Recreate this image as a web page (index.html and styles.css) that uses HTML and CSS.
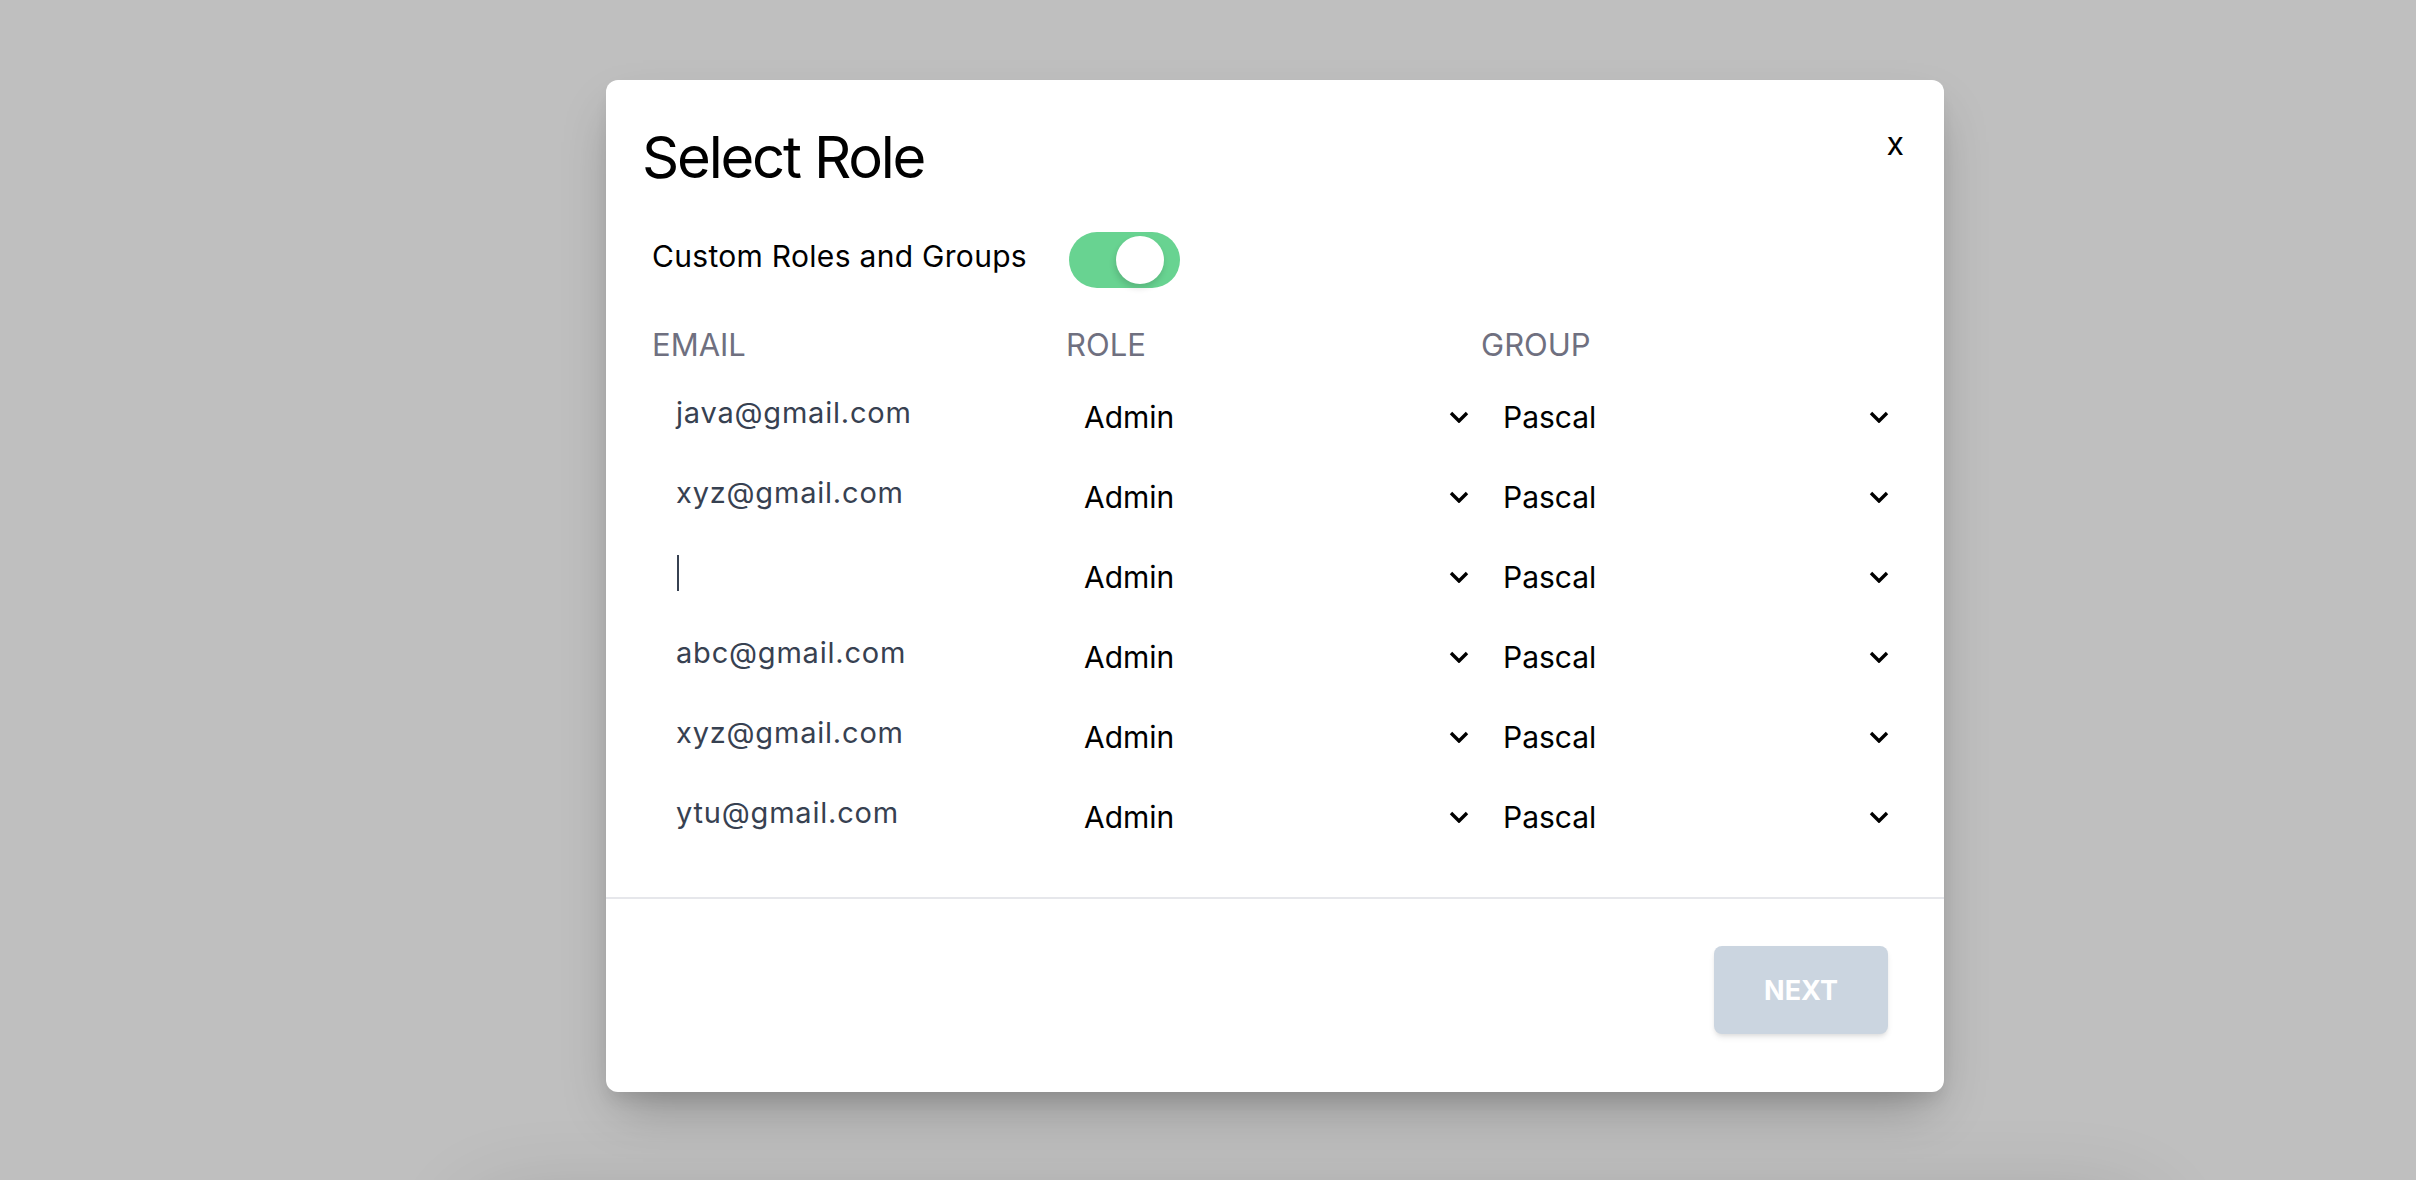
FILE: index.html
```html
<!DOCTYPE html>
<html lang="en">
<head>
<meta charset="utf-8">
<title>Select Role</title>
<link rel="stylesheet" href="styles.css">
</head>
<body>
<div class="backdrop">
  <div class="modal">
    <div class="title-row">
      <h1 class="title">Select Role</h1>
      <span class="close">x</span>
    </div>
    <div class="toggle-row">
      <span class="toggle-label">Custom Roles and Groups</span>
      <span class="toggle"><span class="knob"></span></span>
    </div>
    <div class="grid head">
      <span>EMAIL</span>
      <span>ROLE</span>
      <span>GROUP</span>
    </div>
    <div class="rows">
      <div class="grid row">
        <span class="email">java@gmail.com</span>
        <span class="select role"><span>Admin</span><svg class="chev" viewBox="0 0 20 12"><polyline points="2,2 10,10 18,2"/></svg></span>
        <span class="select group"><span>Pascal</span><svg class="chev" viewBox="0 0 20 12"><polyline points="2,2 10,10 18,2"/></svg></span>
      </div>
      <div class="grid row">
        <span class="email">xyz@gmail.com</span>
        <span class="select role"><span>Admin</span><svg class="chev" viewBox="0 0 20 12"><polyline points="2,2 10,10 18,2"/></svg></span>
        <span class="select group"><span>Pascal</span><svg class="chev" viewBox="0 0 20 12"><polyline points="2,2 10,10 18,2"/></svg></span>
      </div>
      <div class="grid row">
        <span class="email"><span class="caret"></span></span>
        <span class="select role"><span>Admin</span><svg class="chev" viewBox="0 0 20 12"><polyline points="2,2 10,10 18,2"/></svg></span>
        <span class="select group"><span>Pascal</span><svg class="chev" viewBox="0 0 20 12"><polyline points="2,2 10,10 18,2"/></svg></span>
      </div>
      <div class="grid row">
        <span class="email">abc@gmail.com</span>
        <span class="select role"><span>Admin</span><svg class="chev" viewBox="0 0 20 12"><polyline points="2,2 10,10 18,2"/></svg></span>
        <span class="select group"><span>Pascal</span><svg class="chev" viewBox="0 0 20 12"><polyline points="2,2 10,10 18,2"/></svg></span>
      </div>
      <div class="grid row">
        <span class="email">xyz@gmail.com</span>
        <span class="select role"><span>Admin</span><svg class="chev" viewBox="0 0 20 12"><polyline points="2,2 10,10 18,2"/></svg></span>
        <span class="select group"><span>Pascal</span><svg class="chev" viewBox="0 0 20 12"><polyline points="2,2 10,10 18,2"/></svg></span>
      </div>
      <div class="grid row">
        <span class="email">ytu@gmail.com</span>
        <span class="select role"><span>Admin</span><svg class="chev" viewBox="0 0 20 12"><polyline points="2,2 10,10 18,2"/></svg></span>
        <span class="select group"><span>Pascal</span><svg class="chev" viewBox="0 0 20 12"><polyline points="2,2 10,10 18,2"/></svg></span>
      </div>
    </div>
    <div class="footer">
      <button class="next">NEXT</button>
    </div>
  </div>
  <div class="under-shadow"></div>
</div>
</body>
</html>
```

FILE: styles.css
```css
* { box-sizing: border-box; }
html, body { margin: 0; padding: 0; }
body {
  width: 2416px;
  height: 1180px;
  overflow: hidden;
  background: #bfbfbf;
  font-family: Inter, "Noto Sans", "Liberation Sans", sans-serif;
  color: #000;
}
.backdrop {
  position: relative;
  height: 1180px;
  overflow: hidden;
  padding-top: 80px;
  padding-left: 606px;
}
.modal {
  width: 1338px;
  background: #fff;
  border-radius: 12px;
  box-shadow: 0 25px 50px -12px rgba(0,0,0,0.28), 0 10px 15px -3px rgba(0,0,0,0.08);
  position: relative;
  z-index: 1;
}
.title-row {
  display: flex;
  justify-content: space-between;
  align-items: flex-start;
  padding: 42px 40px 0 36px;
}
.title {
  margin: 0;
  font-size: 58px;
  line-height: 70px;
  font-weight: 400;
  letter-spacing: -2.2px;
}
.close {
  margin-top: 6px;
  font-size: 32px;
  line-height: 32px;
}
.toggle-row {
  display: flex;
  align-items: flex-start;
  gap: 42px;
  margin-top: 40px;
  padding-left: 46px;
}
.toggle-label {
  margin-top: 6px;
  font-size: 30px;
  line-height: 36px;
  letter-spacing: 0.3px;
}
.toggle {
  display: flex;
  justify-content: flex-end;
  align-items: center;
  width: 111px;
  height: 56px;
  padding: 0 16px 0 0;
  border-radius: 28px;
  background: #68d391;
}
.knob {
  width: 48px;
  height: 48px;
  border-radius: 50%;
  background: #fff;
  box-shadow: -1px 4px 6px rgba(0,0,0,0.14);
}
.grid {
  display: grid;
  grid-template-columns: 414px 414px 414px;
  padding-left: 46px;
}
.head {
  margin-top: 38px;
  font-size: 31px;
  line-height: 38px;
  color: #6f7080;
}
.head span:nth-child(3) { padding-left: 1px; }
.rows {
  margin-top: 13px;
  padding-bottom: 40px;
  border-bottom: 2px solid #e6e7eb;
}
.row {
  height: 80px;
  align-items: center;
}
.email {
  display: flex;
  align-items: center;
  height: 36px;
  margin-bottom: 8px;
  padding-left: 24px;
  font-size: 29px;
  line-height: 36px;
  letter-spacing: 0.8px;
  color: #374151;
}
.caret {
  display: block;
  width: 2px;
  height: 36px;
  background: #374151;
  margin-left: 1px;
}
.select {
  display: flex;
  justify-content: space-between;
  align-items: center;
  font-size: 30px;
  line-height: 36px;
  color: #000;
}
.select.role { padding: 0 11px 0 18px; }
.select.group { padding: 0 5px 0 23px; }
.chev {
  width: 20px;
  height: 12px;
  fill: none;
  stroke: #000;
  stroke-width: 3.4;
}
.footer {
  display: flex;
  justify-content: flex-end;
  padding: 47px 56px 58px 0;
}
.next {
  width: 174px;
  height: 88px;
  border: 0;
  border-radius: 8px;
  background: #cbd5e0;
  color: #fff;
  font-family: Inter, "Liberation Sans", sans-serif;
  font-size: 27px;
  font-weight: 700;
  box-shadow: 0 4px 6px -1px rgba(0,0,0,0.1), 0 2px 4px -1px rgba(0,0,0,0.06);
}
.under-shadow {
  position: absolute;
  left: 470px;
  top: 1215px;
  width: 1680px;
  height: 300px;
  border-radius: 40px;
  background: #b4b4b4;
  box-shadow: 0 -10px 90px rgba(0,0,0,0.16);
}
```
